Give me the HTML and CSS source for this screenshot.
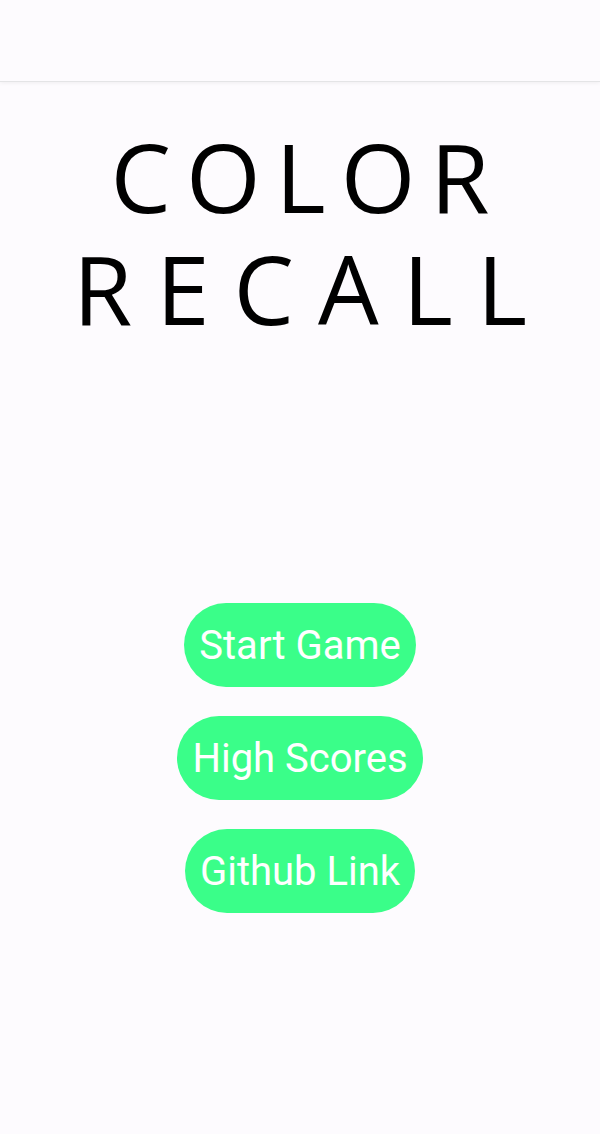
FILE: index.html
```html
<!DOCTYPE html>
<html>
<head>
<meta charset="utf-8">
<link rel="stylesheet" href="styles.css">
</head>
<body>
<header class="topbar"></header>
<main class="home">
  <h1 class="title"><span class="line line-one">COLOR</span><span class="line line-two">RECALL</span></h1>
  <nav class="menu">
    <button class="btn">Start Game</button>
    <button class="btn">High Scores</button>
    <button class="btn">Github Link</button>
  </nav>
</main>
</body>
</html>
```
FILE: styles.css
```css
html, body {
  margin: 0;
  padding: 0;
  background: #fdfbfe;
}
body {
  width: 600px;
  height: 1134px;
  overflow: hidden;
}
.topbar {
  height: 81px;
  background: #fdfbfe;
  border-bottom: 1px solid #e4e4e6;
  box-shadow: 0 1px 4px rgba(0,0,0,0.06);
}
.home {
  display: flex;
  flex-direction: column;
  align-items: center;
}
.title {
  margin: 38px 0 0 0;
  font-family: "Open Sans", sans-serif;
  font-weight: 400;
  font-size: 96px;
  line-height: 112px;
  color: #000;
  text-align: center;
  display: flex;
  flex-direction: column;
  align-items: center;
}
.line-one {
  letter-spacing: 15px;
  margin-right: -15px;
}
.line-two {
  letter-spacing: 24px;
  margin-right: -24px;
}
.menu {
  margin-top: 259px;
  display: flex;
  flex-direction: column;
  align-items: center;
  gap: 29px;
}
.btn {
  font-family: Roboto, sans-serif;
  font-size: 40px;
  color: #fff;
  background: #3afe89;
  border: none;
  border-radius: 42px;
  height: 84px;
  padding: 0 15px;
  cursor: pointer;
}
```
